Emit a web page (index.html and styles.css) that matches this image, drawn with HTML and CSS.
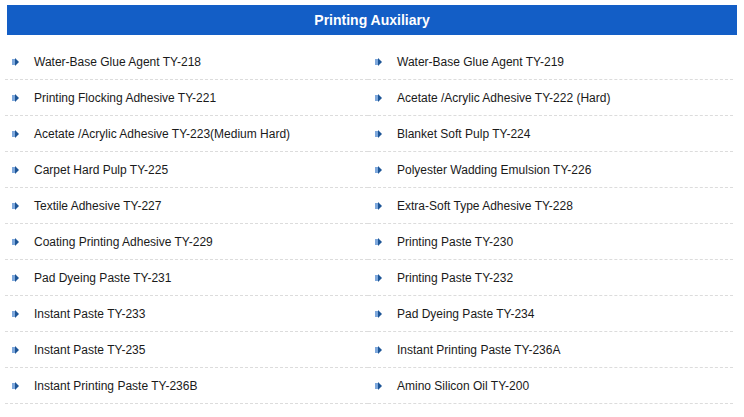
FILE: index.html
```html
<!DOCTYPE html>
<html>
<head>
<meta charset="utf-8">
<link rel="stylesheet" href="styles.css">
</head>
<body>
<div class="panel">
  <div class="title">Printing Auxiliary</div>
  <ul class="list">
    <li><span class="ico"></span>Water-Base Glue Agent TY-218</li>
    <li><span class="ico"></span>Water-Base Glue Agent TY-219</li>
    <li><span class="ico"></span>Printing Flocking Adhesive TY-221</li>
    <li><span class="ico"></span>Acetate /Acrylic Adhesive TY-222 (Hard)</li>
    <li><span class="ico"></span>Acetate /Acrylic Adhesive TY-223(Medium Hard)</li>
    <li><span class="ico"></span>Blanket Soft Pulp TY-224</li>
    <li><span class="ico"></span>Carpet Hard Pulp TY-225</li>
    <li><span class="ico"></span>Polyester Wadding Emulsion TY-226</li>
    <li><span class="ico"></span>Textile Adhesive TY-227</li>
    <li><span class="ico"></span>Extra-Soft Type Adhesive TY-228</li>
    <li><span class="ico"></span>Coating Printing Adhesive TY-229</li>
    <li><span class="ico"></span>Printing Paste TY-230</li>
    <li><span class="ico"></span>Pad Dyeing Paste TY-231</li>
    <li><span class="ico"></span>Printing Paste TY-232</li>
    <li><span class="ico"></span>Instant Paste TY-233</li>
    <li><span class="ico"></span>Pad Dyeing Paste TY-234</li>
    <li><span class="ico"></span>Instant Paste TY-235</li>
    <li><span class="ico"></span>Instant Printing Paste TY-236A</li>
    <li><span class="ico"></span>Instant Printing Paste TY-236B</li>
    <li><span class="ico"></span>Amino Silicon Oil TY-200</li>
  </ul>
</div>
</body>
</html>
```

FILE: styles.css
```css
* { box-sizing: border-box; }
html, body { background: #fff; }
body {
  margin: 0;
  font-family: "Liberation Sans", Arial, sans-serif;
}
.panel {
  padding: 5px 7px 0 7px;
}
.title {
  height: 30px;
  line-height: 30px;
  background: #135ec6;
  color: #fff;
  font-weight: bold;
  font-size: 14px;
  text-align: center;
}
.list {
  list-style: none;
  margin: 9px 0 0 -2px;
  padding: 0;
  width: 728px;
  display: grid;
  grid-template-columns: 363px 365px;
}
.list li {
  height: 36px;
  border-bottom: 1px dashed #dcdcdc;
  display: flex;
  align-items: center;
  padding-left: 7px;
  font-size: 12px;
  color: #1a1a1a;
}
.ico {
  width: 7px;
  height: 8px;
  margin-right: 15px;
  margin-top: 1px;
  position: relative;
}
.ico::before {
  content: "";
  position: absolute;
  left: 0;
  top: 1px;
  width: 3px;
  height: 6px;
  background: #7ea8dc;
}
.ico::after {
  content: "";
  position: absolute;
  left: 3px;
  top: 0;
  border-left: 4px solid #1d5596;
  border-top: 4px solid transparent;
  border-bottom: 4px solid transparent;
}
```
